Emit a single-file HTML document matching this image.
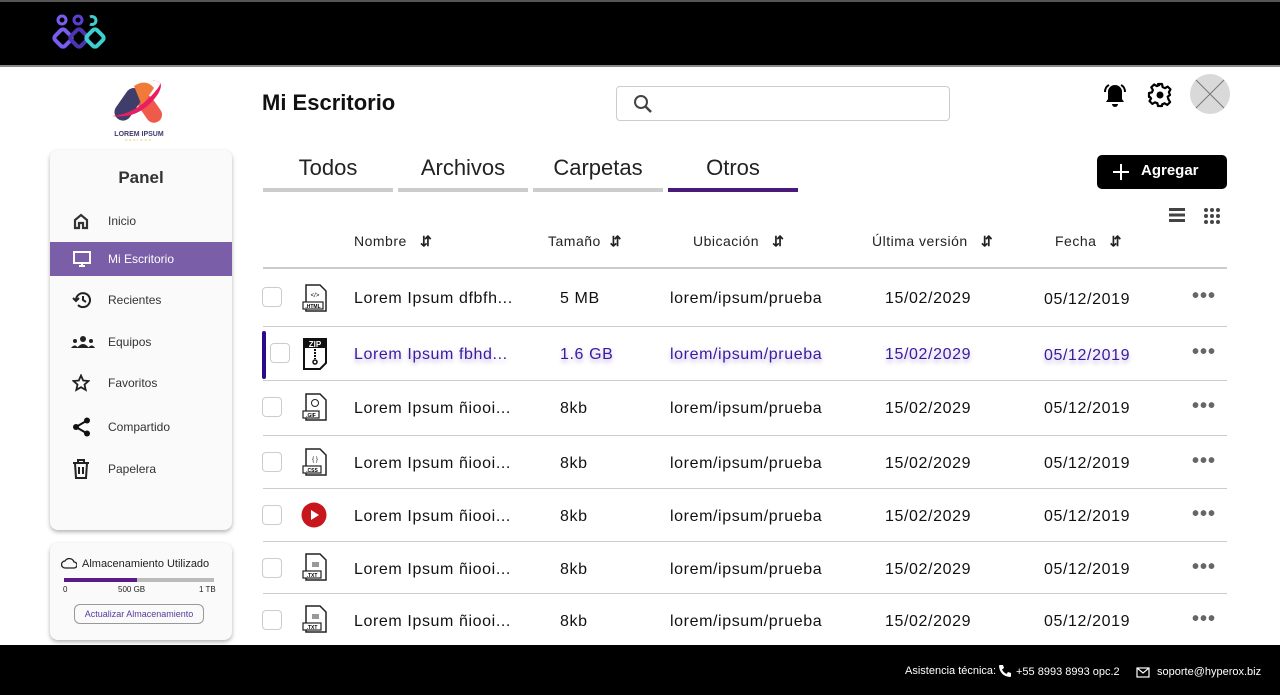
<!DOCTYPE html>
<html><head><meta charset="utf-8"><style>
*{box-sizing:border-box;margin:0;padding:0}
body{width:1280px;height:695px;position:relative;background:#fff;font-family:"Liberation Sans",sans-serif;color:#111;overflow:hidden}
.a{position:absolute}
.top{left:0;top:0;width:1280px;height:67px;background:#000;border-top:2px solid #555;border-bottom:2px solid #888}
.foot{left:0;top:645px;width:1280px;height:50px;background:#000;color:#fff;font-size:11px}
.panel{left:50px;top:150px;width:182px;height:380px;background:#fafafa;border-radius:8px;box-shadow:0 2px 4px rgba(0,0,0,.3)}
.nav{position:absolute;left:0;width:182px;height:34px;font-size:12px;color:#333;display:flex;align-items:center}
.nav span{position:absolute;left:58px}
.nav svg{position:absolute;left:22px}
.tab{top:155px;width:130px;height:37px;text-align:center;font-size:22px;color:#222;border-bottom:4px solid #ccc}
.hdr{top:233px;font-size:14px;color:#222;letter-spacing:.5px}
.hdr b{font-weight:900}
.sep{left:263px;width:964px;height:1px;background:#ccc}
.cell{font-size:16px;color:#111;letter-spacing:.6px;margin-top:2px}
.cb{width:20px;height:20px;border:1px solid #ccc;border-radius:4px;background:#fff}
.dots{font-size:20px;letter-spacing:1px;color:#666;font-weight:bold;margin-top:3px}
.hi{color:#3a1aa0;text-shadow:0 3px 4px rgba(80,40,160,.35)}
</style></head><body>
<div class="a top">
<svg class="a" style="left:50px;top:11px" width="58" height="40" viewBox="0 0 58 40">
<circle cx="12" cy="7" r="4" fill="none" stroke="#7b5cf0" stroke-width="3"/>
<circle cx="28" cy="7" r="4" fill="none" stroke="#5a3fd0" stroke-width="3"/>
<path d="M40 4a4 4 0 1 1 0 7" fill="none" stroke="#3fcfcf" stroke-width="3"/>
<rect x="6" y="18" width="14" height="14" rx="3" transform="rotate(45 13 25)" fill="none" stroke="#7b5cf0" stroke-width="4"/>
<rect x="22" y="18" width="14" height="14" rx="3" transform="rotate(45 29 25)" fill="none" stroke="#4a36b0" stroke-width="4"/>
<rect x="38" y="18" width="14" height="14" rx="3" transform="rotate(45 45 25)" fill="none" stroke="#3fcfcf" stroke-width="4"/>
</svg>
</div>
<svg class="a" style="left:108px;top:78px" width="62" height="64" viewBox="0 0 62 64">
<rect x="34" y="16" width="16" height="30" rx="8" transform="rotate(-35 42 31)" fill="#f05a4a"/>
<rect x="12" y="8" width="17" height="36" rx="8.5" transform="rotate(35 20 26)" fill="#3f3d6a"/>
<path d="M26 8 Q38 0 46 10 L34 28 Z" fill="#f07a3a"/>
<path d="M4 38 Q30 36 50 10 Q56 2 44 3 Q58 2 50 16 Q32 42 4 38Z" fill="#e81e63"/>
<text x="31" y="58" font-size="7" font-weight="bold" fill="#3f3d6a" text-anchor="middle" font-family="Liberation Sans">LOREM IPSUM</text>
<text x="31" y="63" font-size="3" fill="#e8b040" text-anchor="middle" letter-spacing="2">DESIGNS</text>
</svg>
<div class="a panel">
<div class="a" style="left:0;top:18px;width:182px;text-align:center;font-size:17px;font-weight:bold;color:#333">Panel</div>
<div class="nav" style="top:54px"><svg width="18" height="18" viewBox="0 0 18 18"><path d="M3 16V8L9 3L15 8V16H11V11H7V16Z" fill="none" stroke="#333" stroke-width="2.2"/></svg><span>Inicio</span></div>
<div class="nav" style="top:92px;background:#7a5ea7;color:#fff"><svg width="20" height="18" viewBox="0 0 20 18"><rect x="2" y="2" width="16" height="11" fill="none" stroke="#fff" stroke-width="2"/><path d="M7 16h6M10 13v3" stroke="#fff" stroke-width="2"/></svg><span>Mi Escritorio</span></div>
<div class="nav" style="top:133px"><svg width="20" height="18" viewBox="0 0 20 18"><path d="M4 9a7 7 0 1 1 2 5" fill="none" stroke="#222" stroke-width="2"/><path d="M1 7l3 3 3-3" fill="none" stroke="#222" stroke-width="2"/><path d="M11 5v4l3 2" fill="none" stroke="#222" stroke-width="2"/></svg><span>Recientes</span></div>
<div class="nav" style="top:175px"><svg width="26" height="14" viewBox="0 0 26 14" style="left:20px"><circle cx="13" cy="4" r="3" fill="#222"/><circle cx="5" cy="6" r="2" fill="#222"/><circle cx="21" cy="6" r="2" fill="#222"/><path d="M7 13q6-8 12 0ZM1 13q4-5 7 0ZM18 13q4-5 7 0Z" fill="#222"/></svg><span>Equipos</span></div>
<div class="nav" style="top:216px"><svg width="18" height="18" viewBox="0 0 18 18"><path d="M9 1.5l2.2 5 5.3.5-4 3.6 1.2 5.3L9 13.2 4.3 15.9l1.2-5.3-4-3.6 5.3-.5Z" fill="none" stroke="#222" stroke-width="1.8"/></svg><span>Favoritos</span></div>
<div class="nav" style="top:260px"><svg width="20" height="20" viewBox="0 0 20 20"><circle cx="15" cy="3.5" r="3" fill="#111"/><circle cx="4" cy="10" r="3" fill="#111"/><circle cx="15" cy="16.5" r="3" fill="#111"/><path d="M15 3.5L4 10L15 16.5" stroke="#111" stroke-width="2" fill="none"/></svg><span>Compartido</span></div>
<div class="nav" style="top:302px"><svg width="18" height="20" viewBox="0 0 18 20"><path d="M1 4h16M6 4V1h6v3M3 4l1 15h10l1-15M7 8v7M11 8v7" fill="none" stroke="#222" stroke-width="2"/></svg><span>Papelera</span></div>
</div>
<div class="a panel" style="top:543px;height:97px">
<svg class="a" style="left:11px;top:15px" width="16" height="11" viewBox="0 0 16 11"><path d="M4 10h9a3 3 0 0 0 0-6 5 5 0 0 0-9-1 3.5 3.5 0 0 0 0 7Z" fill="none" stroke="#222" stroke-width="1.3"/></svg>
<div class="a" style="left:32px;top:15px;font-size:11px;color:#222">Almacenamiento Utilizado</div>
<div class="a" style="left:14px;top:35px;width:150px;height:4px;background:#bbb"><div style="width:73px;height:4px;background:#5a1a8a"></div></div>
<div class="a" style="left:13px;top:42px;font-size:8px;color:#222">0</div>
<div class="a" style="left:68px;top:42px;font-size:8px;color:#222">500 GB</div>
<div class="a" style="left:149px;top:42px;font-size:8px;color:#222">1 TB</div>
<div class="a" style="left:24px;top:61px;width:130px;height:20px;border:1px solid #999;border-radius:6px;font-size:9px;color:#5a3a9a;text-align:center;line-height:18px">Actualizar Almacenamiento</div>
</div>
<div class="a" style="left:262px;top:90px;font-size:22px;font-weight:bold;color:#111">Mi Escritorio</div>
<div class="a" style="left:616px;top:86px;width:334px;height:35px;border:1px solid #ccc;border-radius:4px">
<svg class="a" style="left:16px;top:7px" width="20" height="20" viewBox="0 0 20 20"><circle cx="8" cy="8" r="6" fill="none" stroke="#444" stroke-width="2"/><path d="M12.5 12.5L18 18" stroke="#444" stroke-width="2.5"/></svg></div>
<svg class="a" style="left:1102px;top:82px" width="26" height="28" viewBox="0 0 26 28"><path d="M13 3a7 7 0 0 0-7 7v7l-2 3h18l-2-3v-7a7 7 0 0 0-7-7Z" fill="#000"/><path d="M10 22a3 3 0 0 0 6 0Z" fill="#000"/><path d="M3 10q0-5 4-7M23 10q0-5-4-7" stroke="#000" stroke-width="2" fill="none"/></svg>
<svg class="a" style="left:1147px;top:82px" width="26" height="26" viewBox="0 0 26 26"><path d="M11 2h4l.6 3 2.4 1.2 2.7-1.6 2.8 2.8-1.6 2.7L23 13l0 0 .0 0-2.3 1.6 .8 2.8 1.6 2.7-2.8 2.8-2.7-1.6-2.4 1L15 24h-4l-.6-2.7-2.4-1-2.7 1.6-2.8-2.8 1.6-2.7L3 15H2v-4l2.9-.6 1-2.4-1.6-2.7 2.8-2.8 2.7 1.6 2.4-1Z" fill="none" stroke="#000" stroke-width="2.2" stroke-linejoin="round"/><circle cx="13" cy="13" r="3.5" fill="#000"/></svg>
<svg class="a" style="left:1190px;top:74px" width="40" height="40" viewBox="0 0 40 40"><circle cx="20" cy="20" r="20" fill="#d9d9d9"/><path d="M6 6L34 34M34 6L6 34" stroke="#777" stroke-width="1"/></svg>
<div class="a tab" style="left:263px">Todos</div>
<div class="a tab" style="left:398px">Archivos</div>
<div class="a tab" style="left:533px">Carpetas</div>
<div class="a tab" style="left:668px;border-color:#4a1a7a">Otros</div>
<div class="a" style="left:1097px;top:155px;width:130px;height:34px;background:#000;border-radius:5px;color:#fff;font-size:15px;font-weight:bold">
<svg class="a" style="left:15px;top:8px" width="18" height="18" viewBox="0 0 18 18"><path d="M9 1v16M1 9h16" stroke="#fff" stroke-width="2"/></svg>
<span class="a" style="left:44px;top:7px">Agregar</span></div>
<svg class="a" style="left:1169px;top:208px" width="16" height="14"><rect y="0" width="16" height="3" fill="#444"/><rect y="5.5" width="16" height="3" fill="#444"/><rect y="11" width="16" height="3" fill="#444"/></svg>
<svg class="a" style="left:1203px;top:207px" width="18" height="18" fill="#444"><circle cx="3" cy="3" r="2"/><circle cx="9" cy="3" r="2"/><circle cx="15" cy="3" r="2"/><circle cx="3" cy="9" r="2"/><circle cx="9" cy="9" r="2"/><circle cx="15" cy="9" r="2"/><circle cx="3" cy="15" r="2"/><circle cx="9" cy="15" r="2"/><circle cx="15" cy="15" r="2"/></svg>
<div class="a hdr" style="left:354px">Nombre &nbsp;&nbsp;<b>⇵</b></div>
<div class="a hdr" style="left:548px">Tamaño &nbsp;<b>⇵</b></div>
<div class="a hdr" style="left:693px">Ubicación &nbsp;&nbsp;<b>⇵</b></div>
<div class="a hdr" style="left:872px">Última versión &nbsp;&nbsp;<b>⇵</b></div>
<div class="a hdr" style="left:1055px">Fecha &nbsp;&nbsp;<b>⇵</b></div>
<div class="a sep" style="top:267px;height:2px"></div>
<div class="a sep" style="top:326px"></div>
<div class="a sep" style="top:380px"></div>
<div class="a sep" style="top:435px"></div>
<div class="a sep" style="top:488px"></div>
<div class="a sep" style="top:541px"></div>
<div class="a sep" style="top:593px"></div>
<div class="a" style="left:262px;top:331px;width:4px;height:48px;background:#2a0a8a;border-radius:2px"></div>

<div class="a cb" style="left:262px;top:287px"></div>
<div class="a cb" style="left:270px;top:343px"></div>
<div class="a cb" style="left:262px;top:397px"></div>
<div class="a cb" style="left:262px;top:452px"></div>
<div class="a cb" style="left:262px;top:505px"></div>
<div class="a cb" style="left:262px;top:558px"></div>
<div class="a cb" style="left:262px;top:610px"></div>

<svg class="a" style="left:300px;top:283px" width="30" height="30" viewBox="0 0 30 30"><path d="M6 2h14l6 6v20H6z" fill="none" stroke="#222" stroke-width="1.5"/><rect x="3" y="19" width="20" height="7" fill="#fff" stroke="#222" stroke-width="1.2"/><text x="13" y="25" font-size="5" text-anchor="middle" font-weight="bold">.HTML</text><text x="15" y="14" font-size="6" text-anchor="middle">&lt;/&gt;</text></svg>
<svg class="a" style="left:302px;top:338px" width="28" height="32" viewBox="0 0 28 32"><path d="M2 1h22v24l-6 6H2z" fill="none" stroke="#111" stroke-width="2"/><rect x="2" y="1" width="22" height="9" fill="#111"/><text x="13" y="9" font-size="8" fill="#fff" text-anchor="middle" font-weight="bold">ZIP</text><path d="M13 11v10" stroke="#111" stroke-width="2" stroke-dasharray="2 1"/><circle cx="13" cy="24" r="2" fill="none" stroke="#111" stroke-width="1.5"/></svg>
<svg class="a" style="left:300px;top:392px" width="30" height="30" viewBox="0 0 30 30"><path d="M6 2h14l6 6v20H6z" fill="none" stroke="#222" stroke-width="1.5"/><rect x="3" y="19" width="16" height="7" fill="#fff" stroke="#222" stroke-width="1.2"/><text x="11" y="25" font-size="5" text-anchor="middle" font-weight="bold">.GIF</text><circle cx="15" cy="11" r="3.5" fill="none" stroke="#222"/></svg>
<svg class="a" style="left:300px;top:447px" width="30" height="30" viewBox="0 0 30 30"><path d="M6 2h14l6 6v20H6z" fill="none" stroke="#222" stroke-width="1.5"/><rect x="3" y="19" width="18" height="7" fill="#fff" stroke="#222" stroke-width="1.2"/><text x="12" y="25" font-size="5" text-anchor="middle" font-weight="bold">.CSS</text><text x="15" y="14" font-size="6" text-anchor="middle">{ }</text></svg>
<svg class="a" style="left:301px;top:502px" width="26" height="26" viewBox="0 0 26 26"><circle cx="13" cy="13" r="12.5" fill="#c8161d"/><path d="M10 8l8 5-8 5z" fill="#fff"/></svg>
<svg class="a" style="left:300px;top:552px" width="30" height="30" viewBox="0 0 30 30"><path d="M6 2h14l6 6v20H6z" fill="none" stroke="#222" stroke-width="1.5"/><rect x="3" y="19" width="18" height="7" fill="#fff" stroke="#222" stroke-width="1.2"/><text x="12" y="25" font-size="5" text-anchor="middle" font-weight="bold">.TXT</text><rect x="12" y="10" width="7" height="5" fill="#999"/></svg>
<svg class="a" style="left:300px;top:604px" width="30" height="30" viewBox="0 0 30 30"><path d="M6 2h14l6 6v20H6z" fill="none" stroke="#222" stroke-width="1.5"/><rect x="3" y="19" width="18" height="7" fill="#fff" stroke="#222" stroke-width="1.2"/><text x="12" y="25" font-size="5" text-anchor="middle" font-weight="bold">.TXT</text><rect x="12" y="10" width="7" height="5" fill="#999"/></svg>

<div class="a cell" style="left:354px;top:288px">Lorem Ipsum dfbfh...</div><div class="a cell" style="left:560px;top:288px">5 MB</div><div class="a cell" style="left:670px;top:288px">lorem/ipsum/prueba</div><div class="a cell" style="left:885px;top:288px">15/02/2029</div><div class="a cell" style="left:1044px;top:289px">05/12/2019</div><div class="a dots" style="left:1192px;top:282px">•••</div>
<div class="a cell hi" style="left:354px;top:344px">Lorem Ipsum fbhd...</div><div class="a cell hi" style="left:560px;top:344px">1.6 GB</div><div class="a cell hi" style="left:670px;top:344px">lorem/ipsum/prueba</div><div class="a cell hi" style="left:885px;top:344px">15/02/2029</div><div class="a cell hi" style="left:1044px;top:345px">05/12/2019</div><div class="a dots" style="left:1192px;top:338px">•••</div>
<div class="a cell" style="left:354px;top:398px">Lorem Ipsum ñiooi...</div><div class="a cell" style="left:560px;top:398px">8kb</div><div class="a cell" style="left:670px;top:398px">lorem/ipsum/prueba</div><div class="a cell" style="left:885px;top:398px">15/02/2029</div><div class="a cell" style="left:1044px;top:398px">05/12/2019</div><div class="a dots" style="left:1192px;top:392px">•••</div>
<div class="a cell" style="left:354px;top:453px">Lorem Ipsum ñiooi...</div><div class="a cell" style="left:560px;top:453px">8kb</div><div class="a cell" style="left:670px;top:453px">lorem/ipsum/prueba</div><div class="a cell" style="left:885px;top:453px">15/02/2029</div><div class="a cell" style="left:1044px;top:453px">05/12/2019</div><div class="a dots" style="left:1192px;top:447px">•••</div>
<div class="a cell" style="left:354px;top:506px">Lorem Ipsum ñiooi...</div><div class="a cell" style="left:560px;top:506px">8kb</div><div class="a cell" style="left:670px;top:506px">lorem/ipsum/prueba</div><div class="a cell" style="left:885px;top:506px">15/02/2029</div><div class="a cell" style="left:1044px;top:506px">05/12/2019</div><div class="a dots" style="left:1192px;top:500px">•••</div>
<div class="a cell" style="left:354px;top:559px">Lorem Ipsum ñiooi...</div><div class="a cell" style="left:560px;top:559px">8kb</div><div class="a cell" style="left:670px;top:559px">lorem/ipsum/prueba</div><div class="a cell" style="left:885px;top:559px">15/02/2029</div><div class="a cell" style="left:1044px;top:559px">05/12/2019</div><div class="a dots" style="left:1192px;top:553px">•••</div>
<div class="a cell" style="left:354px;top:611px">Lorem Ipsum ñiooi...</div><div class="a cell" style="left:560px;top:611px">8kb</div><div class="a cell" style="left:670px;top:611px">lorem/ipsum/prueba</div><div class="a cell" style="left:885px;top:611px">15/02/2029</div><div class="a cell" style="left:1044px;top:611px">05/12/2019</div><div class="a dots" style="left:1192px;top:605px">•••</div>

<div class="a foot">
<span class="a" style="left:905px;top:20px">Asistencia técnica:</span>
<svg class="a" style="left:998px;top:19px" width="14" height="14" viewBox="0 0 14 14"><path d="M2 1l3 0 1 3-2 1.5q1.5 3 4.5 4.5L10 8l3 1v3q0 1-1 1Q2 12 1 2q0-1 1-1Z" fill="#fff"/></svg>
<span class="a" style="left:1016px;top:21px">+55 8993 8993 opc.2</span>
<svg class="a" style="left:1136px;top:22px" width="14" height="11" viewBox="0 0 14 11"><rect x="1" y="1" width="12" height="9" fill="none" stroke="#fff" stroke-width="1.2"/><path d="M1 1l6 5 6-5" fill="none" stroke="#fff" stroke-width="1.2"/></svg>
<span class="a" style="left:1157px;top:21px">soporte@hyperox.biz</span>
</div>
</body></html>
